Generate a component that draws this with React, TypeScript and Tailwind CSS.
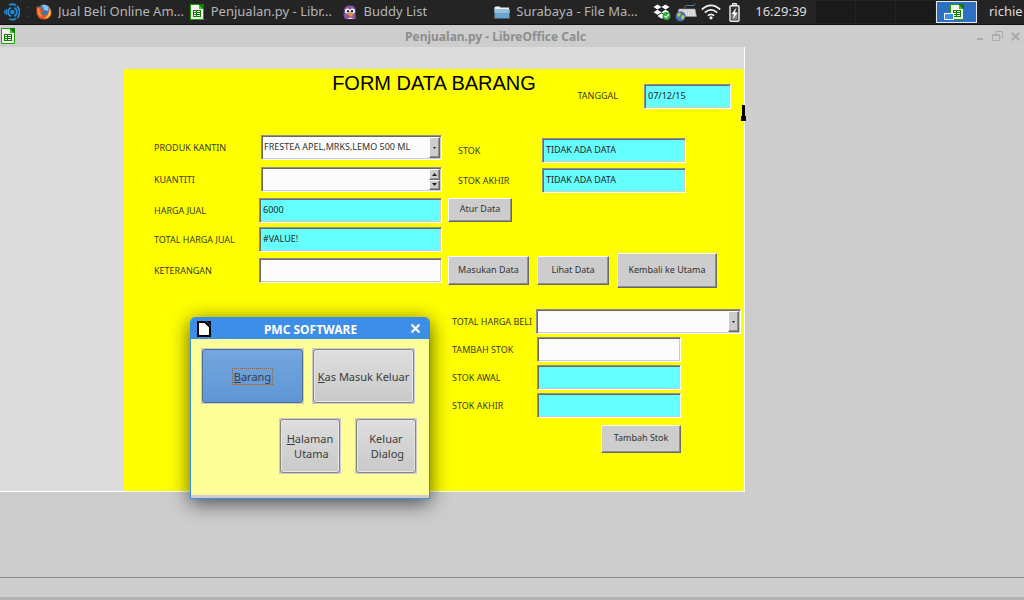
import React from "react";

const SUNKEN =
  "border border-t-[#909090] border-l-[#909090] border-r-white border-b-white shadow-[inset_1px_1px_0_#696969,inset_-1px_-1px_0_#cdcdcd]";
const RAISED =
  "border border-t-white border-l-white border-r-[#696969] border-b-[#696969] bg-[#cdcdcd] shadow-[inset_-1px_-1px_0_#909090]";

function TextField({
  id,
  value = "",
  readOnly = false,
  className = "",
}: {
  id: string;
  value?: string;
  readOnly?: boolean;
  className?: string;
}) {
  return (
    <input
      id={id}
      type="text"
      defaultValue={value}
      readOnly={readOnly}
      className={`h-[25px] rounded-none px-[3px] pb-0.5 text-[9px] text-[#222] outline-none ${SUNKEN} ${
        readOnly ? "bg-[#66ffff]" : "bg-[#fcfcfc]"
      } ${className}`}
    />
  );
}

function ComboField({ id, options, className = "" }: { id: string; options: string[]; className?: string }) {
  return (
    <div className={`flex h-[25px] bg-[#fcfcfc] p-px ${SUNKEN} ${className}`}>
      <select id={id} className="min-w-0 flex-1 appearance-none bg-transparent pb-0.5 pl-px text-[9px] text-[#333] outline-none">
        {options.map((o) => (
          <option key={o}>{o}</option>
        ))}
      </select>
      <span aria-hidden="true" className={`flex w-[11px] items-center justify-center ${RAISED}`}>
        <svg width="3" height="2" viewBox="0 0 3 2">
          <path d="M0 0h3L1.500 2z" fill="#222" />
        </svg>
      </span>
    </div>
  );
}

function SpinField({ id, className = "" }: { id: string; className?: string }) {
  return (
    <div className={`flex h-[25px] bg-[#fcfcfc] p-px ${SUNKEN} ${className}`}>
      <input id={id} type="text" inputMode="numeric" className="min-w-0 flex-1 bg-transparent pl-0.5 text-[9px] outline-none" />
      <span className="flex w-[11px] flex-col">
        <button type="button" aria-label="Tambah kuantiti" className={`flex flex-1 items-center justify-center ${RAISED}`}>
          <svg width="5" height="3" viewBox="0 0 5 3">
            <path d="M0 3h5L2.500 0z" fill="#222" />
          </svg>
        </button>
        <button type="button" aria-label="Kurangi kuantiti" className={`flex flex-1 items-center justify-center ${RAISED}`}>
          <svg width="5" height="3" viewBox="0 0 5 3">
            <path d="M0 0h5L2.500 3z" fill="#222" />
          </svg>
        </button>
      </span>
    </div>
  );
}

function Row({
  id,
  label,
  className = "",
  children,
}: {
  id: string;
  label: string;
  className?: string;
  children: React.ReactNode;
}) {
  return (
    <div className={`flex items-start ${className}`}>
      <label htmlFor={id} className="flex-1 pt-[5px] text-[9px] leading-4 whitespace-nowrap text-[#3a3a20]">
        {label}
      </label>
      {children}
    </div>
  );
}

function FormButton({ children, className = "" }: { children: React.ReactNode; className?: string }) {
  return (
    <button type="button" className={`pb-0.5 text-[9px] whitespace-nowrap text-[#333] ${RAISED} ${className}`}>
      {children}
    </button>
  );
}

function DialogButton({
  children,
  active = false,
  className = "",
}: {
  children: React.ReactNode;
  active?: boolean;
  className?: string;
}) {
  return (
    <button
      type="button"
      className={`flex h-[56px] items-center justify-center border border-[#cbcbcb] bg-[#cbcbcb] text-[11px] leading-[15px] text-[#3c3c3c] ${className}`}
    >
      <span
        className={`flex h-full w-full items-center justify-center rounded-[3px] border whitespace-nowrap ${
          active
            ? "border-[#4e6e92] bg-linear-to-b from-[#74a6e0] to-[#5e96d4]"
            : "border-[#858585] bg-linear-to-b from-[#dedede] to-[#c9c9c9] shadow-[inset_0_0_0_1px_#e6e6e6]"
        }`}
      >
        {children}
      </span>
    </button>
  );
}

function CalcIcon() {
  return (
    <svg width="14" height="16" viewBox="0 0 14 16">
      <path d="M.5.500h8l5 5v10H.5z" fill="#f4f4f0" stroke="#18a303" />
      <path d="M8 0h6v6z" fill="#107c02" />
      <path d="M9 1l4 4h-4z" fill="#43c330" />
      <path d="M3 6h8v7H3z" fill="#107c02" />
      <path d="M4 7h2v1H4zM7 7h3v1H7zM4 9h2v1H4zM7 9h3v1H7zM4 11h2v1H4zM7 11h3v1H7z" fill="#fff" />
    </svg>
  );
}

function FirefoxIcon() {
  return (
    <svg width="16" height="16" viewBox="0 0 16 16">
      <circle cx="8" cy="7.500" r="7" fill="#3478b8" />
      <path d="M6 1q4-1 7 2l-1 4-4-1z" fill="#7cc4ea" />
      <path
        d="M1 2l2 1.500L5.500 3 5 5l3 1.500-1 1.500-2 .5q1 3 4 2.500 3 0 4-4l-1-4q4 3 3.500 6.500Q15 15 8 15.500 1 15 .5 8.500.3 5 1 2z"
        fill="#e2541b"
      />
      <path d="M13.500 4q2 3 1 6.500Q12 15 8 14q5-1 5.500-10z" fill="#fbc53c" />
      <path d="M1.500 4L4 5 3 7l2 2Q4 11 7 12.500 3 13 2 9 1 7 1.500 4z" fill="#f6913a" />
    </svg>
  );
}

function PidginIcon() {
  return (
    <svg width="14" height="15" viewBox="0 0 14 15">
      <path d="M1 6Q1 .5 7 .5T12.500 6q0 4 .5 8L2 14Q0 11 1 6z" fill="#8b5a9b" stroke="#5d3470" strokeWidth=".6" />
      <circle cx="4.500" cy="6" r="2.500" fill="#fff" />
      <circle cx="9.500" cy="6" r="2.500" fill="#fff" />
      <circle cx="5" cy="6.300" r="1.200" fill="#222" />
      <circle cx="9" cy="6.300" r="1.200" fill="#222" />
      <path d="M4.500 9L7 8l3.500 1.500L8 12z" fill="#f79321" />
      <path d="M4 14q3-3 7 0z" fill="#ddd0e0" />
    </svg>
  );
}

function FolderIcon() {
  return (
    <svg width="16" height="13" viewBox="0 0 16 13">
      <path d="M.5 1.500L1.500.500h4l1 1h8.500v3H.5z" fill="#f2f2f2" />
      <path d="M.5 3h15v9.500H.5z" fill="#6ba3cb" />
      <path d="M.5 3h15v4H.5z" fill="#93c0de" />
    </svg>
  );
}

function LauncherIcon() {
  return (
    <svg width="16" height="18" viewBox="0 0 16 18" fill="none" stroke="#1f8ad6">
      <circle cx="8.500" cy="9" r="2.200" fill="#1f8ad6" stroke="none" />
      <circle cx="8.500" cy="9" r="4.400" strokeWidth="1.800" strokeDasharray="11 2.800" strokeDashoffset="-8" />
      <path d="M5 2Q9 .300 12 2.500M5 16q4 1.700 7-.5M13 3q3 3 2.500 7T13 15" strokeWidth="1.800" />
      <path d="M2.500 6Q1.500 9 2.500 12" strokeWidth="1.500" />
      <path d="M0 8h1v2H0z" strokeWidth="1" />
    </svg>
  );
}

function DropboxIcon() {
  return (
    <svg width="18" height="17" viewBox="0 0 18 17">
      <path
        d="M4.500.500L8.500 3 4.500 5.500.500 3zM12.500.500L16.500 3 12.500 5.500 8.500 3zM4.500 5.700l4 2.500-4 2.500-4-2.500zM12.500 5.700l4 2.500-4 2.500-4-2.500zM4.500 12l4-2.800 4 2.800-4 2.700z"
        fill="#fff"
      />
      <circle cx="13.500" cy="12" r="4" fill="#2fae3c" />
      <path d="M11.500 12l1.500 1.500 2.800-3" fill="none" stroke="#fff" strokeWidth="1.200" />
    </svg>
  );
}

function KeyboardIcon() {
  return (
    <svg width="22" height="19" viewBox="0 0 22 19">
      <path d="M10 5V3.500q0-1 2-1h6q2 0 2-2" fill="none" stroke="#4f7fa3" />
      <path d="M4 6h16l1.500 7.500H1.500z" fill="#e4e4e0" stroke="#999" strokeWidth=".6" />
      <path d="M4.500 8h15M4 10h16M4 12h17" stroke="#a0a09c" strokeDasharray="1.500 1" strokeWidth=".6" />
      <circle cx="5.500" cy="13.500" r="4.800" fill="#4678b8" stroke="#294b7c" strokeWidth=".6" />
      <path d="M2 11q2-2 4-1l-1 3-2 1zM7 12l3 1-2 4-2-2z" fill="#bcc849" />
    </svg>
  );
}

function WifiIcon() {
  return (
    <svg width="20" height="16" viewBox="0 0 20 16" fill="none" stroke="#f2f2f2" strokeWidth="1.700">
      <path d="M.8 5.500Q10-2.800 19.200 5.500M3.800 8.700q6.200-5.500 12.400 0M6.800 11.700q3.200-2.800 6.400 0" />
      <circle cx="10" cy="13.800" r="1.600" fill="#f2f2f2" stroke="none" />
    </svg>
  );
}

function BatteryIcon() {
  return (
    <svg width="11" height="19" viewBox="0 0 11 19">
      <path d="M3.500.500h4v2h-4z" fill="#999" stroke="#f2f2f2" />
      <rect x="1" y="2.700" width="9" height="15.500" rx="1" fill="#343434" stroke="#f2f2f2" strokeWidth="1.400" />
      <path d="M2.500 10h6v6.700h-6z" fill="#858585" />
      <path d="M7.500 4.500L2.500 11h2.700L4 16l4.700-6.500H6z" fill="#fff" />
    </svg>
  );
}

function TaskItem({ icon, children }: { icon: React.ReactNode; children: React.ReactNode }) {
  return (
    <button type="button" className="flex min-w-0 items-center gap-1.5 text-left">
      <span className="flex w-4 shrink-0 justify-center">{icon}</span>
      <span className="truncate">{children}</span>
    </button>
  );
}

function Taskbar() {
  return (
    <header className="flex h-[25px] items-center border-b border-[#111] bg-[#242424] text-[13px] text-[#b4b6b8]">
      <button type="button" aria-label="Menu" className="flex w-9 shrink-0 items-center gap-1.5 pl-1">
        <LauncherIcon />
        <span className="h-2.5 w-1 border-y border-[#333]" />
      </button>
      <nav className="grid h-full flex-1 grid-cols-4">
        <TaskItem icon={<FirefoxIcon />}>Jual Beli Online Am...</TaskItem>
        <TaskItem icon={<CalcIcon />}>Penjualan.py - Libr...</TaskItem>
        <TaskItem icon={<PidginIcon />}>Buddy List</TaskItem>
        <TaskItem icon={<FolderIcon />}>Surabaya - File Ma...</TaskItem>
      </nav>
      <div className="flex shrink-0 items-center gap-1 pl-1.5">
        <DropboxIcon />
        <KeyboardIcon />
        <WifiIcon />
        <span className="px-1">
          <BatteryIcon />
        </span>
      </div>
      <time className="w-[66px] shrink-0 pl-2 text-center text-[#dcdcdc]">16:29:39</time>
      <div className="ml-1.5 grid h-6 shrink-0 grid-cols-[39px_39px_39px_41px] gap-px bg-[#242424]">
        <span className="my-px bg-[#1a1a1a]" />
        <span className="my-px bg-[#1a1a1a]" />
        <span className="my-px bg-[#1a1a1a]" />
        <span className="relative my-px flex items-center justify-center border border-[#e8e8e8] bg-[#2d6fc0]">
          <CalcIcon />
          <span className="absolute bottom-0.5 left-[7px] h-[7px] w-2.5 border border-white bg-[#3d8fe8]" />
        </span>
      </div>
      <span className="w-[47px] shrink-0 pl-3 text-[#dcdcdc]">richie</span>
    </header>
  );
}

function TitleBar() {
  return (
    <div className="flex h-[22px] items-center gap-1 px-px">
      <CalcIcon />
      <h1 className="flex-1 pt-0.5 text-center text-[12px] font-bold text-[#8e8e8e]">Penjualan.py - LibreOffice Calc</h1>
      <div className="flex items-center justify-end gap-2 pr-[3px]">
        <button type="button" aria-label="Minimalkan">
          <svg width="8" height="10" viewBox="0 0 8 10">
            <path d="M1 7h6v2H1z" fill="#aaa" />
          </svg>
        </button>
        <button type="button" aria-label="Pulihkan">
          <svg width="11" height="10" viewBox="0 0 11 10" fill="none" stroke="#aaa">
            <path d="M3.500 3V.500h7v6H8M.500 3.500h7v6h-7zM.500 4.500h7" />
          </svg>
        </button>
        <button type="button" aria-label="Tutup">
          <svg width="9" height="9" viewBox="0 0 9 9">
            <path d="M.7.700l7.600 7.600M8.300.700L.7 8.300" stroke="#aaa" strokeWidth="2" />
          </svg>
        </button>
      </div>
    </div>
  );
}

function ItemForm() {
  return (
    <form className="relative flex h-[422px] w-[620px] flex-col bg-[#ffff00]">
      <div className="grid h-[66px] grid-cols-[1fr_auto_1fr]">
        <h2 className="col-start-2 font-['Liberation_Sans',sans-serif] text-[20px] leading-7 text-black">FORM DATA BARANG</h2>
        <div className="mt-[15px] flex items-start justify-end pr-[13px]">
          <label htmlFor="tanggal" className="pt-1 pr-[26px] text-[9px] leading-4 text-[#3a3a20]">
            TANGGAL
          </label>
          <TextField id="tanggal" value="07/12/15" readOnly className="w-[87px]" />
        </div>
      </div>
      <div className="flex gap-1.5 pl-[30px]">
        <div className="grid w-[288px] grid-rows-[32px_31px_29px_31px_25px] content-start">
          <Row id="produk" label="PRODUK KANTIN">
            <ComboField id="produk" options={["FRESTEA APEL,MRKS,LEMO 500 ML"]} className="w-[181px]" />
          </Row>
          <Row id="kuantiti" label="KUANTITI">
            <SpinField id="kuantiti" className="w-[181px]" />
          </Row>
          <Row id="harga" label="HARGA JUAL">
            <TextField id="harga" value="6000" readOnly className="w-[183px]" />
          </Row>
          <Row id="total" label="TOTAL HARGA JUAL">
            <TextField id="total" value="#VALUE!" readOnly className="w-[183px]" />
          </Row>
          <Row id="keterangan" label="KETERANGAN">
            <TextField id="keterangan" className="w-[183px]" />
          </Row>
        </div>
        <div className="flex flex-1 flex-col items-start pt-[3px]">
          <div className="flex w-[238px] flex-col gap-[5px] pl-2.5">
            <Row id="stok" label="STOK">
              <TextField id="stok" value="TIDAK ADA DATA" readOnly className="w-36" />
            </Row>
            <Row id="stok-akhir" label="STOK AKHIR">
              <TextField id="stok-akhir" value="TIDAK ADA DATA" readOnly className="w-36" />
            </Row>
          </div>
          <FormButton className="mt-[5px] h-6 w-16">Atur Data</FormButton>
          <div className="mt-[31px] flex items-center gap-2">
            <FormButton className="h-[29px] w-[81px]">Masukan Data</FormButton>
            <FormButton className="h-[29px] w-[72px]">Lihat Data</FormButton>
            <FormButton className="h-[35px] w-[100px]">Kembali ke Utama</FormButton>
          </div>
          <div className="mt-[21px] flex flex-col gap-[3px] pl-1">
            <Row id="total-beli" label="TOTAL HARGA BELI" className="w-[289px]">
              <ComboField id="total-beli" options={[""]} className="w-[205px]" />
            </Row>
            <Row id="tambah" label="TAMBAH STOK" className="w-[229px]">
              <TextField id="tambah" className="w-36" />
            </Row>
            <Row id="awal" label="STOK AWAL" className="w-[229px]">
              <TextField id="awal" readOnly className="w-36" />
            </Row>
            <Row id="akhir" label="STOK AKHIR" className="w-[229px]">
              <TextField id="akhir" readOnly className="w-36" />
            </Row>
            <FormButton className="mt-1 ml-[149px] h-7 w-20">Tambah Stok</FormButton>
          </div>
        </div>
      </div>
      <svg className="absolute top-9 -right-0.5" width="5" height="16" viewBox="0 0 5 16">
        <path d="M1 0h3v11h1v5H0v-5h1z" fill="#000" />
      </svg>
    </form>
  );
}

function ProductDialog() {
  return (
    <section
      role="dialog"
      aria-labelledby="dialog-title"
      className="absolute top-[317px] left-[190px] w-60 rounded-t-[5px] border border-[#3d8ee8] bg-[#ffff99] shadow-[0_4px_20px_rgba(0,0,0,0.65)]"
    >
      <div className="flex h-[21px] items-center justify-between rounded-t-[4px] bg-[#3d8ee8] pr-2 pl-1.5">
        <svg width="14" height="16" viewBox="0 0 14 16">
          <path d="M1 1h7l5 5v9H1z" fill="#fff" stroke="#000" strokeWidth="2" />
          <path d="M9 0h5v5z" fill="#000" />
        </svg>
        <h2 id="dialog-title" className="pt-0.5 text-[12px] font-bold text-white">
          PMC SOFTWARE
        </h2>
        <button type="button" aria-label="Tutup dialog">
          <svg width="11" height="11" viewBox="0 0 11 11">
            <path d="M1.500 1.500l8 8M9.500 1.500l-8 8" stroke="#fff" strokeWidth="2.200" />
          </svg>
        </button>
      </div>
      <div className="border-b-[3px] border-[#cdcdcd] px-2.5 pt-[9px] pb-[21px]">
        <div className="flex gap-2">
          <DialogButton active className="w-[103px]">
            <span className="px-px outline-1 outline-[#94602c] outline-dotted">
              <u>B</u>arang
            </span>
          </DialogButton>
          <DialogButton className="w-[103px]">
            <span>
              <u>K</u>as Masuk Keluar
            </span>
          </DialogButton>
        </div>
        <div className="mt-3.5 flex justify-end gap-3.5 pr-0.5">
          <DialogButton className="w-[62px]">
            <span>
              <u>H</u>alaman
              <br />
              &nbsp;Utama
            </span>
          </DialogButton>
          <DialogButton className="w-[62px]">
            <span>
              Keluar
              <br />
              &nbsp;Dialog
            </span>
          </DialogButton>
        </div>
      </div>
    </section>
  );
}

export default function App() {
  return (
    <div className="relative flex min-h-screen flex-col bg-[#cdcdcd] font-['Noto_Sans',sans-serif]">
      <Taskbar />
      <TitleBar />
      <main className="flex-1">
        <div className="w-fit border-r border-b border-white bg-[#dcdcdc] pt-[22px] pl-[124px]">
          <ItemForm />
        </div>
      </main>
      <footer className="h-[23px] border-t border-b-[3px] border-t-[#909090] border-b-[#b3b3b3]" />
      <ProductDialog />
    </div>
  );
}
